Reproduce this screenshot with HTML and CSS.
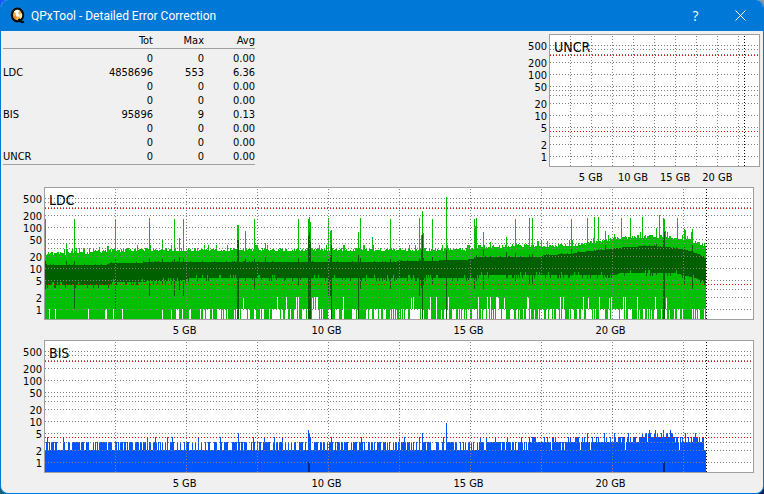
FILE: index.html
```html
<!DOCTYPE html>
<html lang="en">
<head>
    <meta charset="UTF-8">
    <meta name="viewport" content="width=device-width, initial-scale=1.0">
    <title>QPxTool - Detailed Error Correction</title>
    <link rel="stylesheet" href="styles.css">
</head>
<body>
    <div class="window">
        <header class="titlebar">
            <svg class="logo" width="16" height="18" viewBox="0 0 16 18" aria-hidden="true">
                <ellipse cx="7.5" cy="8" rx="5.6" ry="6.3" fill="#f5b544" stroke="#0a0a0a" stroke-width="2.2"/>
                <path d="M7.5 8 L4 4.4 A4.8 5.2 0 0 1 9.5 3.2 Z" fill="#fff"/>
                <path d="M7.5 8 L12 6.4 A4.5 5 0 0 1 10.5 11.8 Z" fill="#ffe9a8"/>
                <path d="M7.5 8 L3.2 9 A4.5 5 0 0 0 6 12.6 Z" fill="#e88b35"/>
                <circle cx="7.5" cy="8" r="1.7" fill="#fff"/>
                <path d="M8.5 12 L10.5 14.2 Q12 15.8 14 14.6" stroke="#0a0a0a" stroke-width="2" fill="none"/>
            </svg>
            <h1>QPxTool - Detailed Error Correction</h1>
            <button class="title-btn" type="button" aria-label="Help">?</button>
            <button class="title-btn close" type="button" aria-label="Close">
                <svg width="11" height="11" viewBox="0 0 11 11"><path d="M.5 .5 L10.5 10.5 M10.5 .5 L.5 10.5" stroke="#fff" fill="none"/></svg>
            </button>
        </header>
        <main>
            <div class="top">
                <table class="totals">
                    <thead>
                        <tr><th></th><th>Tot</th><th>Max</th><th>Avg</th></tr>
                    </thead>
                    <tbody>
                        <tr class="first"><td></td><td>0</td><td>0</td><td>0.00</td></tr>
                        <tr><td>LDC</td><td>4858696</td><td>553</td><td>6.36</td></tr>
                        <tr><td></td><td>0</td><td>0</td><td>0.00</td></tr>
                        <tr><td></td><td>0</td><td>0</td><td>0.00</td></tr>
                        <tr><td>BIS</td><td>95896</td><td>9</td><td>0.13</td></tr>
                        <tr><td></td><td>0</td><td>0</td><td>0.00</td></tr>
                        <tr><td></td><td>0</td><td>0</td><td>0.00</td></tr>
                        <tr><td>UNCR</td><td>0</td><td>0</td><td>0.00</td></tr>
                    </tbody>
                </table>
                <section class="chart small" data-name="UNCR" data-width="209"></section>
            </div>
            <section class="chart" data-name="LDC" data-width="708"></section>
            <section class="chart" data-name="BIS" data-width="708"></section>
        </main>
    </div>
    <script src="script.js"></script>
</body>
</html>
```

FILE: styles.css
```css
* {
    box-sizing: border-box;
}
body {
    margin: 0;
    background: linear-gradient(to right, #1557ff, #8a97a8) top / 100% 50% no-repeat,
        linear-gradient(to right, #14606c, #0a1c48) bottom / 100% 50% no-repeat;
    font-family: Tahoma, "DejaVu Sans Condensed", "DejaVu Sans", sans-serif;
    font-size: 11px;
    color: #000;
}
.window {
    min-height: 100vh;
    border: 1px solid #0078d7;
    border-top: none;
    border-radius: 8px;
    background-color: #f0f0f0;
    overflow: hidden;
}
.titlebar {
    display: flex;
    align-items: center;
    height: 31px;
    padding-left: 9px;
    background-color: #0078d7;
    color: #fff;
}
.titlebar h1 {
    flex: 1;
    margin: 0;
    padding-left: 5px;
    font-family: "Segoe UI", Roboto, sans-serif;
    font-size: 12px;
    font-weight: normal;
}
.title-btn {
    display: flex;
    align-items: center;
    justify-content: center;
    width: 45px;
    height: 31px;
    padding: 0;
    border: none;
    background: none;
    color: #fff;
    font-family: "Segoe UI", "Open Sans", sans-serif;
    font-size: 14px;
}
.title-btn:hover {
    background-color: #1a86db;
}
.close:hover {
    background-color: #e81123;
}
.top {
    display: flex;
    justify-content: space-between;
    align-items: flex-start;
    padding: 3px 3px 0 2px;
}
.totals {
    width: 252px;
    border-spacing: 0;
    border-bottom: 1px solid #a0a0a0;
}
.totals th,
.totals td {
    padding: 0;
    height: 14px;
    line-height: 14px;
    text-align: right;
    font-weight: normal;
}
.totals th {
    border-bottom: 1px solid #a0a0a0;
}
.totals .first td {
    padding-top: 3px;
}
.totals th:nth-child(1) {
    width: 60px;
}
.totals th:nth-child(2) {
    width: 90px;
}
.totals th:nth-child(3),
.totals th:nth-child(4) {
    width: 51px;
}
.totals td:first-child {
    text-align: left;
}
.chart {
    display: grid;
    grid-template-columns: 43px 1fr;
    padding-right: 9px;
}
.chart.small {
    width: 254px;
    padding-right: 0;
}
.chart svg {
    display: block;
    width: 100%;
}
.y-axis {
    height: 133px;
}
.frame {
    display: grid;
    border: 1px solid #a0a0a0;
    background-color: #fff;
}
.frame > * {
    grid-area: 1 / 1;
}
.plot {
    height: 131px;
}
.frame h2 {
    margin: 0;
    padding: 3px 4px;
    font-size: 14px;
    line-height: 18px;
    font-weight: normal;
    z-index: 1;
}
.x-axis {
    grid-column: 2;
    height: 20px;
    overflow: visible;
}
.y-axis text {
    text-anchor: end;
}
.x-axis text {
    text-anchor: middle;
}
```

FILE: script.js
```js
const HEIGHT = 131;
const GB_RANGE = 24.93;
const DISC_GB = 23.3;
const LDC_END = 661;

// repeatable noise, 0..1
function noise(x, seed) {
    let n = Math.imul(x + 1, 374761393) ^ Math.imul(seed, 668265263);
    n = Math.imul(n ^ (n >>> 13), 1274126177);
    return ((n ^ (n >>> 16)) >>> 0) / 4294967296;
}

// log scale, 41 rows for each decade
function row(value) {
    return value <= 0 ? HEIGHT : Math.floor(121.4 - 41 * Math.log10(value));
}

function curve(points, x) {
    for (let i = 1; i < points.length; i++) {
        const [x0, y0] = points[i - 1];
        const [x1, y1] = points[i];
        if (x <= x1) return Math.round(y0 + (y1 - y0) * (x - x0) / (x1 - x0));
    }
    return points[points.length - 1][1];
}

function bar(x, top, bottom) {
    return `M${x} ${top}h1V${bottom}h-1z`;
}

const ldc = {
    top: [[0, 66], [45, 65], [60, 63], [100, 62], [425, 62], [431, 59], [495, 58], [530, 57], [555, 54], [570, 51], [595, 49], [620, 49], [645, 53], [653, 55], [661, 58]],
    hi: [[0, 77], [60, 77], [65, 75], [130, 74], [330, 74], [372, 73], [415, 72], [429, 71], [431, 69], [495, 69], [500, 67], [525, 66], [535, 64], [565, 61], [580, 59], [605, 58], [630, 60], [645, 63], [655, 67], [661, 71]],
    lo: [[0, 97], [64, 97], [66, 94], [135, 93], [145, 90], [430, 90], [432, 87], [570, 87], [575, 85], [630, 85], [650, 90], [661, 95]],
    // column, top row
    spikes: [[0, 31], [21, 55], [29, 31], [70, 31], [104, 30], [117, 51], [129, 31], [134, 50], [138, 31], [192, 37], [193, 37], [200, 43], [209, 31], [220, 55], [253, 31], [263, 31], [264, 29], [265, 34], [283, 30], [285, 43], [286, 42], [313, 44], [315, 30], [327, 49], [345, 31], [374, 30], [376, 47], [377, 23], [378, 45], [387, 31], [401, 9], [429, 31], [430, 38], [431, 30], [438, 44], [461, 49], [470, 31], [484, 30], [487, 30], [526, 31], [542, 30], [549, 29], [553, 29], [560, 43], [576, 30], [585, 30], [597, 29], [611, 40], [614, 27], [618, 30], [619, 31], [620, 43], [632, 30], [639, 41], [640, 42], [646, 44], [647, 41]],
    // column, top row, bottom row
    dark: [[0, 73, 102], [21, 73, 97], [29, 73, 121], [70, 70, 121], [104, 70, 108], [117, 71, 97], [129, 71, 108], [134, 69, 102], [138, 70, 108], [192, 52, 131], [193, 52, 131], [200, 71, 93], [209, 71, 101], [220, 69, 90], [253, 70, 97], [263, 48, 131], [264, 44, 131], [265, 54, 131], [283, 70, 108], [285, 67, 108], [286, 57, 131], [313, 67, 131], [315, 70, 101], [345, 71, 101], [374, 70, 108], [376, 62, 100], [377, 47, 131], [378, 70, 96], [387, 68, 96], [401, 62, 131], [429, 69, 101], [431, 67, 93], [438, 61, 101], [461, 64, 90], [470, 65, 93], [484, 66, 96], [487, 66, 96], [526, 61, 88], [560, 57, 89], [611, 56, 87], [618, 50, 131], [619, 44, 131], [639, 59, 96], [647, 57, 101]],
    gaps: [4, 10, 43, 60, 61, 68, 77, 117, 126, 131, 132, 133, 137, 144],
    tallGaps: [198, 232, 241, 251, 253, 267, 269, 271, 272, 298, 366, 368, 385, 391, 403, 433, 442, 445, 451, 452, 453, 459, 482, 483, 515, 518, 538, 543, 554, 564, 566, 578, 580, 592, 610, 621]
};

function drawLdc() {
    let light = "", dark = "";
    for (let x = 0; x < LDC_END; x++) {
        const n = noise(x >> (noise(x, 9) > 0.5 ? 1 : 0), 1);
        let top = curve(ldc.top, x) - (n > 0.93 ? 5 : Math.floor(n * 4) - 1);
        let bottom = HEIGHT;
        if (ldc.gaps.includes(x) || (x > 144 && noise(x, 2) < (x < 190 ? 0.35 : 0.46))) bottom = row(1);
        if (ldc.tallGaps.includes(x)) bottom = row(2);

        let hi = curve(ldc.hi, x) - (noise(x, 3) > 0.9 ? 1 : 0);
        let lo = curve(ldc.lo, x);
        const m = noise(x, 4);
        if (m > 0.85) lo += 3;
        if (m < 0.12) lo -= 3;

        const spike = ldc.spikes.find(s => s[0] === x);
        if (spike) top = spike[1];
        const deep = ldc.dark.find(s => s[0] === x);
        if (deep) {
            hi = deep[1];
            lo = deep[2];
            if (lo === HEIGHT) bottom = HEIGHT;
        }
        light += bar(x, top, bottom);
        dark += bar(x, hi, lo);
    }
    return `<path d="${light}" fill="#00c000"/><path d="${dark}" fill="#006000"/>`;
}

const bis = {
    four: [2, 18, 102, 110, 122, 127, 153, 175, 208, 219, 229, 237, 265, 286, 316, 354, 359, 374, 398, 435, 441, 450],
    five: [193, 264, 377, 542, 559, 569, 583, 597, 600, 603, 612, 622, 626, 640, 650],
    six: [263, 604, 610, 618, 625]
};

function drawBis() {
    let bars = "";
    for (let x = 0; x < LDC_END; x++) {
        const density = x < 420 ? 0.56 : x < 500 ? 0.82 : x < 570 ? 0.9 : 0.97;
        const fours = x < 458 ? 0 : x < 515 ? 0.2 : x < 570 ? 0.32 : x < 595 ? 0.6 : x < 630 ? 0.88 : 0.6;
        let value = noise(x, 6) < density ? 3 : 2;
        if (value === 3 && noise(x, 7) < fours) value = 4;
        if (x > 595 && x < 632 && noise(x, 8) > 0.75) value = 5;
        if (bis.four.includes(x)) value = 4;
        if (bis.five.includes(x)) value = 5;
        if (bis.six.includes(x)) value = 6;
        if (x === 401) value = 9;
        if (x > 658) value = 2;
        bars += bar(x, row(value), HEIGHT);
    }
    return `<path d="${bars}" fill="#0055ff"/><path d="M263 121h2v10h-2zM618 121h2v10h-2z" fill="#002a80"/>`;
}

function drawGrid(width) {
    const line = (d, color) => `<path d="${d}" stroke="${color}" stroke-dasharray="1 2" fill="none"/>`;
    let grey = "";
    for (const v of [1, 2, 3, 5, 10, 20, 30, 40, 50, 100, 200, 300, 400, 500]) {
        grey += `M0 ${row(v) + 0.5}H${width}`;
    }
    for (let gb = 2.5; gb < GB_RANGE; gb += 2.5) {
        grey += `M${Math.round(gb * width / GB_RANGE) - 0.5} 1V${HEIGHT}`;
    }
    return line(grey, "#808080")
        + line(`M0 ${row(290) + 0.5}H${width}M0 ${row(4) + 0.5}H${width}`, "#ff0000")
        + line(`M${Math.round(DISC_GB * width / GB_RANGE) - 0.5} 1V${HEIGHT}`, "#000");
}

document.querySelectorAll(".chart").forEach(chart => {
    const name = chart.dataset.name;
    const width = Number(chart.dataset.width);
    const yLabels = [500, 200, 100, 50, 20, 10, 5, 2, 1]
        .map(v => `<text x="41" y="${row(v) + 6}">${v}</text>`).join("");
    const xLabels = [5, 10, 15, 20]
        .map(gb => `<text x="${gb * 4 - 0.2}%" y="14">${gb} GB</text>`).join("");
    const data = name === "LDC" ? drawLdc() : name === "BIS" ? drawBis() : "";

    chart.innerHTML = `
        <svg class="y-axis">${yLabels}</svg>
        <div class="frame">
            <h2>${name}</h2>
            <svg class="plot" viewBox="0 0 ${width} ${HEIGHT}" preserveAspectRatio="none" shape-rendering="crispEdges">${data}${drawGrid(width)}</svg>
        </div>
        <svg class="x-axis">${xLabels}</svg>`;
});
```
